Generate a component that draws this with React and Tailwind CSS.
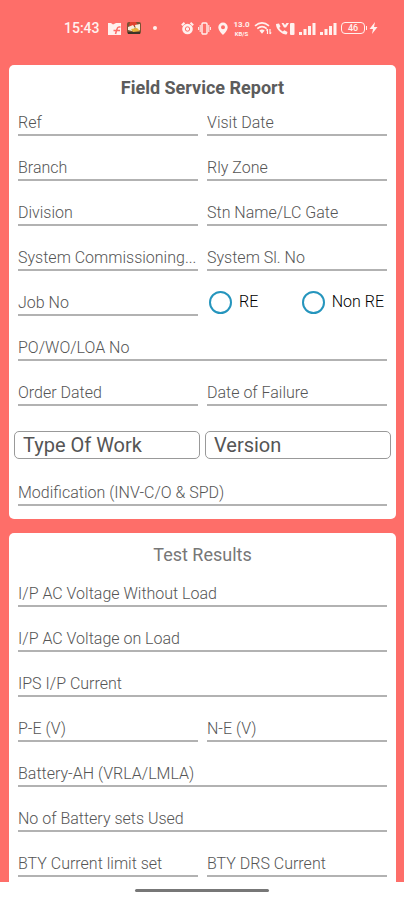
import { useState } from "react";

const reportFields = [
  "Ref",
  "Visit Date",
  "Branch",
  "Rly Zone",
  "Division",
  "Stn Name/LC Gate",
  "System Commissioning...",
  "System Sl. No",
];

const workTypes = ["Type Of Work", "Installation", "Maintenance"];
const versions = ["Version", "V1", "V2"];

const testFields = [
  { label: "I/P AC Voltage Without Load", wide: true },
  { label: "I/P AC Voltage on Load", wide: true },
  { label: "IPS I/P Current", wide: true },
  { label: "P-E (V)" },
  { label: "N-E (V)" },
  { label: "Battery-AH (VRLA/LMLA)", wide: true },
  { label: "No of Battery sets Used", wide: true },
  { label: "BTY Current limit set" },
  { label: "BTY DRS Current" },
];

function Field({ label, wide }) {
  return (
    <input
      type="text"
      aria-label={label}
      placeholder={label}
      className={`h-7 w-full min-w-0 rounded-none border-b-2 border-[#b2b2b2] bg-transparent pt-[2px] text-base font-light text-[#333] outline-none placeholder:text-[#555] ${
        wide ? "col-span-2" : ""
      }`}
    />
  );
}

function Dropdown({ label, options }) {
  return (
    <select
      aria-label={label}
      className="h-7 w-full min-w-0 appearance-none rounded-[5px] border border-[#999] bg-white px-2 text-xl leading-6 text-[#555] outline-none"
    >
      {options.map((o) => (
        <option key={o}>{o}</option>
      ))}
    </select>
  );
}

function Signal() {
  return (
    <svg viewBox="0 0 17 13" className="h-[13px] w-[17px]" fill="currentColor">
      <rect x="0" y="10" width="3" height="3" />
      <rect x="4.5" y="7" width="3" height="6" />
      <rect x="9" y="4" width="3" height="9" />
      <rect x="13.5" y="1" width="3" height="12" />
    </svg>
  );
}

function StatusBar() {
  return (
    <header className="flex h-[65px] items-start justify-between pt-5 pr-[26px] pl-16 text-[#fff1ee]">
      <div className="flex h-4 items-center gap-[6px]">
        <span className="mr-[2px] text-sm leading-4 font-medium">15:43</span>
        <svg viewBox="0 0 13 13" className="size-[13px]">
          <path fill="currentColor" d="M0 1h3l2 1.5L8 1h5v12H0z" />
          <path
            fill="none"
            stroke="#fe6e69"
            strokeWidth="1.6"
            d="M12.500 5h-1.500q-1.500 0-2 2L7.500 12M5.500 8.500H12"
          />
        </svg>
        <svg viewBox="0 0 14 14" className="size-[14px]">
          <rect y="1" width="14" height="12" rx="2" fill="#7a5233" />
          <path fill="#e0402f" d="M3 1h6l2 4H2z" />
          <path fill="#f8ecdc" d="M1 6l5-2 2 3-3 3-4-1zM8 4l5-1v6l-4 1z" />
          <path fill="#e8b23a" d="M4 8l6-1 3 3-7 1z" />
          <path fill="#3b3528" d="M1 11h12v2H1z" />
        </svg>
        <span className="ml-[6px] size-1 rounded-full bg-current" />
      </div>

      <div className="flex h-4 items-center gap-1">
        <svg viewBox="0 0 13 13" className="size-[13px]">
          <circle cx="6.5" cy="7" r="5.3" fill="currentColor" />
          <path stroke="currentColor" strokeWidth="2" d="M.8 3.2 3.5.8M12.2 3.2 9.5.8" />
          <circle cx="6.5" cy="7" r="2.2" fill="none" stroke="#fe6e69" />
        </svg>
        <svg viewBox="0 0 13 13" className="size-[13px]" fill="none" stroke="currentColor">
          <rect x="4" y="1" width="5" height="11" rx="1" strokeWidth="1.4" />
          <path d="M2.2 3v7M.6 5v3M10.8 3v7M12.4 5v3" />
        </svg>
        <svg viewBox="0 0 12 13" className="ml-[2px] h-[13px] w-3">
          <path
            fill="currentColor"
            fillRule="evenodd"
            d="M6 .5a4.7 4.7 0 0 0-4.7 4.7C1.3 8.600 6 13 6 13s4.700-4.400 4.700-7.800A4.700 4.700 0 0 0 6 .5zM6 3.200a2 2 0 1 1 0 4 2 2 0 0 1 0-4z"
          />
        </svg>
        <span className="flex w-[17px] flex-col items-center font-bold">
          <span className="text-[8px] leading-[10px]">13.0</span>
          <span className="text-[6px] leading-[7px]">KB/S</span>
        </span>
        <svg viewBox="0 0 18 14" className="h-[14px] w-[18px]" fill="none" stroke="currentColor">
          <path strokeWidth="1.6" d="M1 4.800q7-6 14 0M3.300 7.600q4.700-4 9.400 0" />
          <path fill="currentColor" stroke="none" d="M5.300 9.600q2.700-2 5.400 0L8 12.800z" />
          <path strokeWidth="1.200" d="M13.500 8v5M12.300 9.500l1.200-1.500M16 8v5M17.200 11.500 16 13" />
        </svg>
        <svg viewBox="0 0 19 13" className="h-[13px] w-[19px]" fill="currentColor">
          <path d="M0 2l3-.5L4.500 4.500 3.200 6q1.200 2.200 3.600 3.500l1.500-1.300L11.500 10l-.6 2.300Q7.500 13 4 9.800 0 6.500 0 2z" />
          <path d="M5.500 1h2l1.500 2 1.500-2h2.500l-3 4.500H8z" />
          <rect x="14" y="1" width="4.500" height="12" rx="1" />
        </svg>
        <Signal />
        <Signal />
        <span className="flex items-center gap-px">
          <span className="flex h-3 w-6 items-center justify-center rounded-[4px] border border-current text-[9px] leading-none font-medium">
            46
          </span>
          <span className="h-1 w-px bg-current" />
          <svg viewBox="0 0 9 12" className="ml-px h-3 w-[9px]" fill="currentColor">
            <path d="M6 0 .5 7H4l-1 5 5.500-7H5z" />
          </svg>
        </span>
      </div>
    </header>
  );
}

function App() {
  const [area, setArea] = useState("");

  return (
    <div className="flex min-h-screen flex-col bg-[#fe6e69] font-[Roboto,sans-serif]">
      <StatusBar />

      <main className="flex flex-1 flex-col gap-[14px] pr-2 pl-[9px]">
        <section className="rounded-[5px] bg-white px-[9px] pt-[11px] pb-[13px]">
          <h1 className="mb-2 text-center text-lg leading-6 font-bold text-[#5c5c5c]">
            Field Service Report
          </h1>

          <div className="grid grid-cols-2 gap-x-[9px] gap-y-[17px]">
            {reportFields.map((label) => (
              <Field key={label} label={label} />
            ))}
            <Field label="Job No" />
            <div className="flex h-7 items-center justify-between pr-[3px] pl-[2px] text-base text-[#222]">
              {["RE", "Non RE"].map((name) => (
                <label key={name} className="flex items-center gap-[7px]">
                  <input
                    type="radio"
                    name="area"
                    value={name}
                    checked={area === name}
                    onChange={() => setArea(name)}
                    className="size-[23px] appearance-none rounded-full border-2 border-[#2595bd] checked:border-[6px]"
                  />
                  <span className="font-light text-black">{name}</span>
                </label>
              ))}
            </div>
            <Field label="PO/WO/LOA No" wide />
            <Field label="Order Dated" />
            <Field label="Date of Failure" />
          </div>

          <div className="-mx-1 mt-[25px] mb-[19px] grid grid-cols-2 gap-[5px]">
            <Dropdown label="Type Of Work" options={workTypes} />
            <Dropdown label="Version" options={versions} />
          </div>

          <Field label="Modification (INV-C/O & SPD)" />
        </section>

        <section className="flex-1 rounded-t-[5px] bg-white px-[9px] pt-[10px] pb-[5px]">
          <h2 className="mb-3 text-center text-lg leading-6 text-[#777]">
            Test Results
          </h2>

          <div className="grid grid-cols-2 gap-x-[9px] gap-y-[17px]">
            {testFields.map((f) => (
              <Field key={f.label} label={f.label} wide={f.wide} />
            ))}
          </div>
        </section>
      </main>

      {/* gesture bar */}
      <footer className="flex h-[18px] justify-center bg-white pt-[7px]">
        <div className="h-[3px] w-1/3 rounded-full bg-[#777]" />
      </footer>
    </div>
  );
}

export default App;
